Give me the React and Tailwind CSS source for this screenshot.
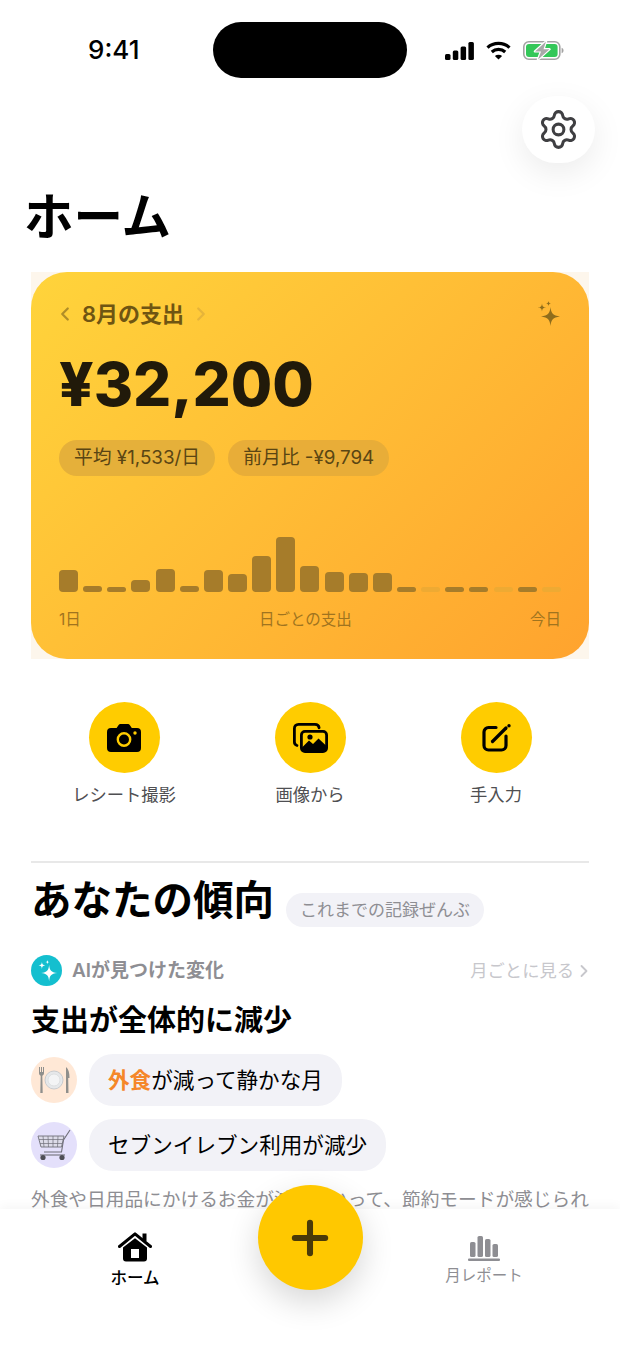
// App.jsx - Home screen of a receipt and spending tracker
import React from 'react';
import { ChevronLeft, ChevronRight, Plus, Settings } from 'lucide-react';

// h: bar height in px, faint: a day with no spending yet
const days = [
  { h: 22 }, { h: 6 }, { h: 5 }, { h: 12 }, { h: 23 }, { h: 6 }, { h: 22 },
  { h: 18 }, { h: 36 }, { h: 55 }, { h: 26 }, { h: 20 }, { h: 19 }, { h: 19 },
  { h: 5 }, { h: 5, faint: true }, { h: 5 }, { h: 5 }, { h: 5, faint: true }, { h: 5 }, { h: 5, faint: true },
];

const StatusIcons = () => (
  <div className="flex items-center gap-[12px]">
    <svg width="29" height="18" viewBox="0 0 29 18" fill="#000">
      <rect x="0" y="12" width="5.5" height="6" rx="1.5" />
      <rect x="7.8" y="8.5" width="5.5" height="9.5" rx="1.5" />
      <rect x="15.6" y="4.5" width="5.5" height="13.5" rx="1.5" />
      <rect x="23.4" y="0" width="5.5" height="18" rx="1.5" />
    </svg>
    <svg width="25" height="19" viewBox="0 0 25 19" fill="none" stroke="#000" strokeWidth="3.2">
      <path d="M1.5 6.6C7.6 1 17.4 1 23.5 6.6" />
      <path d="M5.8 11C9.6 7.6 15.4 7.6 19.2 11" />
      <path d="M12.5 18.6L8.9 14.9C10.9 13.3 14.1 13.3 16.1 14.9Z" fill="#000" stroke="none" />
    </svg>
    <svg width="41" height="19" viewBox="0 0 41 19">
      <rect x="0.8" y="0.8" width="36" height="17.4" rx="5" fill="none" stroke="#a3a3a3" strokeWidth="1.6" />
      <rect x="3" y="3" width="31.6" height="13" rx="3" fill="#34c759" />
      <path d="M38.6 6.8c1.3.4 1.9 1.4 1.9 2.7s-.6 2.3-1.9 2.7z" fill="#a3a3a3" />
      <path d="M23 0.5L12 10.4H18L15 18.5L26.5 8.2H20.5Z" fill="#a9a9a9" stroke="#fff" strokeWidth="2.4" strokeLinejoin="round" paintOrder="stroke" />
    </svg>
  </div>
);

const CameraIcon = () => (
  <svg width="34" height="28" viewBox="0 0 34 28">
    <path d="M4 4h5.6l1.7-2.6C12 .5 12.8 0 14 0h6.4c1.2 0 2 .5 2.7 1.4L24.8 4H30a4 4 0 0 1 4 4v16a4 4 0 0 1-4 4H4a4 4 0 0 1-4-4V8a4 4 0 0 1 4-4z" fill="#000" />
    <circle cx="17" cy="15.5" r="6.2" fill="none" stroke="#ffcc00" strokeWidth="2.4" />
    <circle cx="28" cy="9" r="1.7" fill="#ffcc00" />
  </svg>
);

const ImagesIcon = () => (
  <svg width="35" height="30" viewBox="0 0 35 30">
    <path d="M4 22.5c-1.6-.4-2.6-1.6-2.6-3.4V5.5C1.400 3 3 1.400 5.500 1.400h16.500c2.300 0 3.800 1.300 4.100 3.400" fill="none" stroke="#000" strokeWidth="2.800" strokeLinecap="round" />
    <rect x="8.400" y="8.400" width="25.200" height="20.200" rx="3.600" fill="#ffcc00" stroke="#000" strokeWidth="2.800" />
    <path d="M8.500 25L16 17.500L20 21L25.500 15.500L33.500 23V25.500a3 3 0 0 1-3 3H11.500a3 3 0 0 1-3-3z" fill="#000" />
    <circle cx="17" cy="14" r="2.600" fill="#000" />
  </svg>
);

const EditIcon = () => (
  <svg width="29" height="28" viewBox="0 0 29 28" fill="none" stroke="#000">
    <path d="M14 3.500H6.500a4.500 4.500 0 0 0-4.500 4.500V21.500A4.500 4.500 0 0 0 6.500 26H19.500A4.500 4.500 0 0 0 24 21.500V12" strokeWidth="3.200" strokeLinecap="round" />
    <path d="M10.500 17.500L24 4" strokeWidth="3.200" strokeLinecap="round" />
    <circle cx="27" cy="1.800" r="1.700" fill="#000" stroke="none" />
  </svg>
);

const Sparkle = ({ size = 26, fill = '#8f6d1c' }) => (
  <svg width={size} height={size} viewBox="0 0 26 26" fill={fill}>
    <path d="M15.500 6C16.200 12.500 17.800 14.500 25 15.500C17.800 16.500 16.200 18.500 15.500 25C14.800 18.500 13.200 16.500 6 15.500C13.200 14.500 14.800 12.500 15.500 6Z" />
    <path d="M7 2.500C7.400 5.500 8 6.100 11 6.500C8 6.900 7.400 7.500 7 10.500C6.600 7.500 6 6.900 3 6.500C6 6.100 6.600 5.500 7 2.500Z" />
    <path d="M13.500 0C13.800 1.800 14.200 2.200 16 2.500C14.200 2.800 13.800 3.200 13.500 5C13.200 3.200 12.800 2.800 11 2.500C12.800 2.200 13.200 1.800 13.500 0Z" />
  </svg>
);

const PlateIcon = () => (
  <svg width="32" height="28" viewBox="0 0 32 28">
    <circle cx="16" cy="14" r="9" fill="#e6e8ea" stroke="#c9cccf" />
    <circle cx="16" cy="14" r="6" fill="#f3f4f5" stroke="#d8dadc" strokeWidth="0.800" />
    <path d="M1 1v6c0 1.500.7 2.300 1.700 2.800L2.300 27h2.400L4.300 9.800C5.300 9.300 6 8.500 6 7V1H5v5H4V1H3v5H2V1z" fill="#8f8f8c" />
    <path d="M28 1c2.500 2 3.500 5.500 3.500 11H30.200L30.500 27h-2.500z" fill="#8f8f8c" />
  </svg>
);

const CartIcon = () => (
  <svg width="34" height="32" viewBox="0 0 34 32" fill="none" stroke="#6f6f78">
    <path d="M33 1L26.500 11L24.500 23H7" strokeWidth="1.100" />
    <path d="M1 7H27L24.500 18H4Z" fill="#dcdbe8" strokeWidth="0.900" />
    <path d="M6 7L7 18M11 7L11.500 18M16 7V18M21 7L20.500 18M2 10.500H26.500M3 14.500H25.500" strokeWidth="0.700" />
    <path d="M3 26H28" strokeWidth="1.100" />
    <circle cx="6" cy="28.500" r="2.600" fill="#4f4f56" stroke="none" />
    <circle cx="25" cy="28.500" r="2.600" fill="#4f4f56" stroke="none" />
  </svg>
);

const HomeIcon = () => (
  <svg width="34" height="30" viewBox="0 0 34 30">
    <path d="M24.500 1.500h4v7.500h-4z" fill="#000" />
    <path d="M1.500 14.500L17 1.800L32.500 14.500" fill="none" stroke="#000" strokeWidth="3" strokeLinecap="round" strokeLinejoin="round" />
    <path d="M5 15.500L17 6.200L29 15.500V26.500a3 3 0 0 1-3 3H8a3 3 0 0 1-3-3z" fill="#000" />
    <rect x="13" y="17" width="8" height="9" fill="#fff" />
  </svg>
);

const ReportIcon = () => (
  <svg width="32" height="26" viewBox="0 0 32 26" fill="#8e8e93">
    <rect x="2" y="7" width="5.500" height="15" rx="1.600" />
    <rect x="9.500" y="1" width="5.500" height="21" rx="1.600" />
    <rect x="17" y="4" width="5.500" height="18" rx="1.600" />
    <rect x="24.500" y="9" width="5.500" height="13" rx="1.600" />
    <rect x="0" y="23.600" width="32" height="2.400" rx="1" />
  </svg>
);

const ActionButton = ({ icon, label }) => (
  <div className="flex flex-col items-center gap-[10px]">
    <div className="flex h-[71px] w-[71px] items-center justify-center rounded-full bg-[#ffcc00]">{icon}</div>
    <span className="text-[17.300px] leading-[24px] text-[#4f4f52]">{label}</span>
  </div>
);

const App = () => {
  return (
    <div className="relative h-[1348px] w-[620px] overflow-hidden bg-white font-['Inter','Noto_Sans_CJK_JP',sans-serif] text-black">
      {/* Status bar */}
      <div className="grid h-[78px] grid-cols-[213px_194px_213px] items-end">
        <span className="pb-[13px] pl-[88px] text-[26px] font-medium leading-[30px]">9:41</span>
        <div className="h-[56px] rounded-full bg-black" />
        <div className="flex pb-[18px] pl-[38px]"><StatusIcons /></div>
      </div>

      {/* Settings */}
      <div className="flex justify-end pr-[25px] pt-[18px]">
        <button type="button" className="flex h-[67px] w-[73px] items-center justify-center rounded-full bg-white shadow-[0_10px_32px_rgba(0,0,0,0.08)]">
          <Settings size={43} strokeWidth={1.700} className="text-[#3f3f42]" />
        </button>
      </div>

      <h1 className="pl-[24px] pt-[21px] text-[49.500px] font-bold leading-[66px]">ホーム</h1>

      {/* Monthly spending card */}
      <div className="mx-[31px] mt-[22px] bg-[#fdf6ec]">
        <div className="h-[387px] rounded-[36px] bg-[linear-gradient(135deg,#ffd43b_0%,#ffbc35_50%,#ffa32e_100%)] px-[28px] pt-[28px]">
          <div className="flex h-[28px] items-center justify-between">
            <div className="flex items-center gap-[6px] text-[#6f5512]">
              <ChevronLeft size={22} strokeWidth={2.500} className="-ml-[5px] text-[#b08d28]" />
              <span className="text-[22px] font-semibold leading-[28px]">8月の支出</span>
              <ChevronRight size={22} strokeWidth={2.500} className="text-[#e6b43a]" />
            </div>
            <Sparkle />
          </div>
          <div className="mt-[21px] text-[60px] font-extrabold leading-[70px] text-[#211a0a]">¥32,200</div>
          <div className="mt-[21px] flex gap-[13px]">
            <span className="rounded-full bg-[#e5b03a] px-[15px] text-[18.800px] leading-[36px] text-[#5a4513]">平均 ¥1,533/日</span>
            <span className="rounded-full bg-[#e8ad38] px-[15px] text-[18.800px] leading-[36px] text-[#5a4513]">前月比 -¥9,794</span>
          </div>
          <div className="mt-[60px] flex h-[56px] items-end justify-between">
            {days.map((d, i) => (
              <div
                key={i}
                style={{ height: d.h }}
                className={d.faint ? 'w-[19px] rounded-[3px] bg-[#eeaa33]' : 'w-[19px] rounded-[4px] bg-[#a67c2a]'}
              />
            ))}
          </div>
          <div className="mt-[16px] flex justify-between text-[15.500px] leading-[24px] text-[#a0741f]">
            <span>1日</span>
            <span>日ごとの支出</span>
            <span>今日</span>
          </div>
        </div>
      </div>

      {/* Quick actions */}
      <div className="mx-[31px] mt-[43px] grid grid-cols-3">
        <ActionButton icon={<CameraIcon />} label="レシート撮影" />
        <ActionButton icon={<ImagesIcon />} label="画像から" />
        <ActionButton icon={<EditIcon />} label="手入力" />
      </div>

      <div className="mx-[31px] mt-[54px] h-[2px] bg-[#e8e8e8]" />

      {/* Trends */}
      <section className="px-[31px]">
        <div className="mt-[12px] flex items-center gap-[12px]">
          <h2 className="text-[40.500px] font-bold leading-[52px]">あなたの傾向</h2>
          <span className="mt-[18px] rounded-full bg-[#f2f2f7] px-[14px] text-[17px] leading-[34px] text-[#8e8e93]">これまでの記録ぜんぶ</span>
        </div>

        <div className="mt-[28px] flex items-center justify-between">
          <div className="flex items-center gap-[10px]">
            <div className="flex h-[31px] w-[31px] items-center justify-center rounded-full bg-[#14bfcf]">
              <Sparkle size={22} fill="#fff" />
            </div>
            <span className="text-[19px] font-semibold leading-[31px] text-[#8e8e93]">AIが見つけた変化</span>
          </div>
          <div className="flex items-center text-[17.300px] text-[#c7c7cc]">
            <span>月ごとに見る</span>
            <ChevronRight size={20} strokeWidth={2.200} className="-mr-[5px]" />
          </div>
        </div>

        <h3 className="mt-[14px] text-[29px] font-bold leading-[42px]">支出が全体的に減少</h3>

        <div className="mt-[12px] flex items-center gap-[12px]">
          <div className="flex h-[46px] w-[46px] items-center justify-center rounded-full bg-[#ffe8d6]"><PlateIcon /></div>
          <div className="rounded-[24px] bg-[#f2f2f7] px-[19px] text-[21.600px] leading-[52px]">
            <span className="font-semibold text-[#f5872a]">外食</span>が減って静かな月
          </div>
        </div>
        <div className="mt-[13px] flex items-center gap-[12px]">
          <div className="flex h-[46px] w-[46px] items-center justify-center rounded-full bg-[#e4e0fb]"><CartIcon /></div>
          <div className="rounded-[24px] bg-[#f2f2f7] px-[19px] text-[21.600px] leading-[52px]">セブンイレブン利用が減少</div>
        </div>

        <p className="mt-[15px] text-[18.700px] leading-[28px] text-[#8e8e93]">
          外食や日用品にかけるお金が減っていって、節約モードが感じられます。
        </p>
      </section>

      {/* Tab bar */}
      <nav className="absolute inset-x-0 bottom-0 grid h-[139px] grid-cols-[270px_78px_272px] items-start bg-white pt-[23px] shadow-[0_-3px_10px_rgba(0,0,0,0.04)]">
        <div className="flex flex-col items-center gap-[5px]">
          <HomeIcon />
          <span className="text-[16.500px] font-medium leading-[22px]">ホーム</span>
        </div>
        <div />
        <div className="flex flex-col items-center gap-[4px] pt-[3px]">
          <ReportIcon />
          <span className="text-[15.500px] leading-[22px] text-[#8e8e93]">月レポート</span>
        </div>
      </nav>

      {/* Add button */}
      <button type="button" className="absolute bottom-[58px] left-[257.500px] flex h-[105px] w-[105px] items-center justify-center rounded-full bg-[#ffc800] shadow-[0_12px_32px_rgba(0,0,0,0.16)]">
        <Plus size={52} strokeWidth={2.800} className="text-[#4a3a08]" />
      </button>
    </div>
  );
};

export default App;
